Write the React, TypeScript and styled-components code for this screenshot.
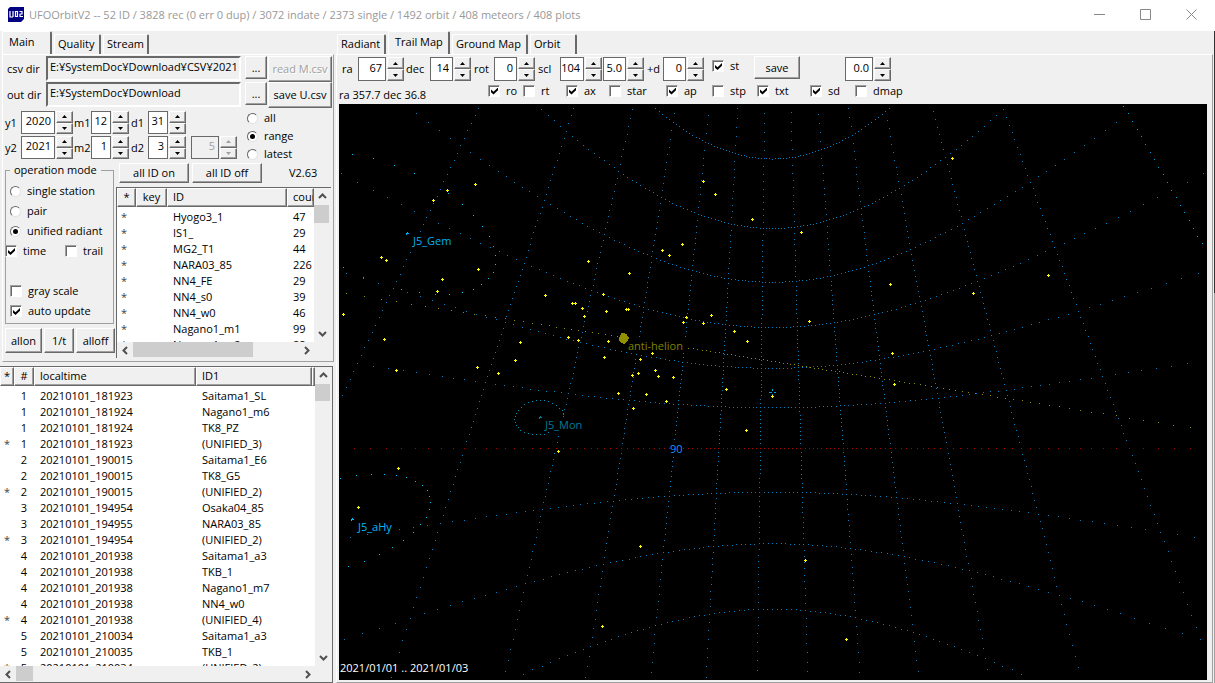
import React from 'react';
import styled, { createGlobalStyle, css } from 'styled-components';

const FACE = '#f0f0f0';
const SHADOW = '#a0a0a0';
const DARK = '#696969';

const GlobalStyle = createGlobalStyle`
  * { box-sizing: border-box; }
  html, body, #root { height: 100%; }
  body {
    margin: 0;
    background: ${FACE};
    color: #000;
    font: 11px/16px "Open Sans", "Noto Sans", sans-serif;
    overflow: hidden;
  }
  button, input { font: inherit; color: inherit; margin: 0; padding: 0; }
`;

const raised = css`
  background: ${FACE};
  border: 1px solid;
  border-color: #fff ${DARK} ${DARK} #fff;
  box-shadow: inset -1px -1px 0 ${SHADOW};
`;

const Window = styled.div`
  display: flex;
  flex-direction: column;
  height: 100vh;
`;

const TitleBar = styled.header`
  display: flex;
  align-items: center;
  flex: none;
  height: 31px;
  padding: 0 0 2px 8px;
  background: #fff;
  color: #999;
`;

const Title = styled.h1`
  flex: 1;
  margin: 0 0 0 4px;
  font-size: 11px;
  font-weight: 400;
  line-height: 16px;
  white-space: nowrap;
`;

const CaptionButton = styled.button`
  display: flex;
  align-items: center;
  justify-content: center;
  width: 46px;
  height: 29px;
  border: 0;
  background: none;
  &:last-child { margin-right: 1px; }
`;

const Workspace = styled.div`
  flex: 1;
  min-height: 0;
  display: grid;
  grid-template-columns: 335px minmax(0, 1fr) 1px;
`;

const Column = styled.div`
  display: flex;
  flex-direction: column;
  min-width: 0;
  min-height: 0;
`;

const Backdrop = styled.div`
  background: linear-gradient(#333 262px, ${SHADOW} 262px);
`;

const TabStrip = styled.div`
  display: flex;
  align-items: flex-end;
  gap: 2px;
  flex: none;
  height: 23px;
  padding-left: 2px;
`;

const TabButton = styled.button<{ $active?: boolean; $width: number }>`
  width: ${p => p.$width}px;
  height: ${p => (p.$active ? 23 : 20)}px;
  padding: 0 0 ${p => (p.$active ? 2 : 1)}px ${p => (p.$active ? 6 : 3)}px;
  border: 0;
  border-top: 1px solid #fff;
  border-left: 1px solid #fff;
  border-right: 2px solid ${DARK};
  border-radius: 2px 2px 0 0;
  background: ${FACE};
  text-align: left;
  white-space: nowrap;
`;

const Sheet = styled.section<{ $grow?: boolean }>`
  display: flex;
  flex-direction: column;
  flex: ${p => (p.$grow ? '1' : 'none')};
  min-height: 0;
  border: 1px solid;
  border-color: #fff ${SHADOW} ${SHADOW} #fff;
`;

const MainSheet = styled(Sheet)`
  height: 308px;
  margin: 0 1px 0 2px;
  padding: 1px 2px 3px;
  overflow: hidden;
`;

const PathRow = styled.div`
  display: grid;
  grid-template-columns: 41px 195px 4px 22px 1px 1fr;
  height: 26px;
  & > button:nth-of-type(1) { grid-column: 4; height: 23px; }
  & > button:nth-of-type(2) { grid-column: 6; height: 26px; margin-right: -1px; }
`;

const PathLabel = styled.label`
  padding: 5px 0 0 2px;
  white-space: nowrap;
`;

const PathInput = styled.input`
  min-width: 0;
  height: 25px;
  padding: 0 2px 5px;
  border: 2px solid;
  border-color: ${DARK} #fff #fff ${DARK};
  background: ${FACE};
`;

const PushButton = styled.button`
  ${raised}
  min-width: 0;
  white-space: nowrap;
  overflow: hidden;
  &:disabled { color: ${SHADOW}; text-shadow: 1px 1px 0 #fff; }
`;

const DateArea = styled.div`
  display: grid;
  grid-template-columns: 242px 1fr;
  height: 53px;
  padding-top: 1px;
`;

const DateGrid = styled.div`
  display: grid;
  grid-template-columns: 16px 53px 17px 40px 17px 43px 47px;
  grid-template-rows: 23px 23px;
  row-gap: 2px;
  padding-top: 2px;
  align-items: center;
`;

const Spin = styled.span<{ $box: number; $tall?: boolean }>`
  display: grid;
  grid-template-columns: ${p => p.$box}px 17px;
  column-gap: 1px;
  height: ${p => (p.$tall ? 24 : 23)}px;
`;

const SpinInput = styled.input`
  min-width: 0;
  padding: 0 3px 3px 0;
  border: 1px solid ${DARK};
  background: #fff;
  text-align: right;
  &:disabled { background: ${FACE}; color: ${SHADOW}; }
`;

const SpinArrows = styled.span`
  display: grid;
  grid-template-rows: 1fr 1fr;
`;

const SpinArrow = styled.button`
  ${raised}
  display: flex;
  align-items: center;
  justify-content: center;
  &:disabled { color: ${SHADOW}; }
`;

const ChoiceLabel = styled.label`
  display: inline-flex;
  align-items: center;
  gap: 6px;
  height: 20px;
  white-space: nowrap;
`;

const Radio = styled.input`
  appearance: none;
  position: relative;
  flex: none;
  width: 11px;
  height: 11px;
  border: 1px solid;
  border-color: ${DARK} #e3e3e3 #e3e3e3 ${DARK};
  border-radius: 50%;
  background: #fff;
  &:checked::before {
    content: '';
    position: absolute;
    inset: 2px;
    border-radius: 50%;
    background: #000;
  }
`;

const Check = styled.input`
  appearance: none;
  position: relative;
  flex: none;
  width: 12px;
  height: 12px;
  border: 1px solid;
  border-color: ${SHADOW} #fff #fff ${SHADOW};
  box-shadow: inset 1px 1px 0 ${DARK};
  background: #fff;
  &:checked::before {
    content: '';
    position: absolute;
    left: 2px;
    top: 2px;
    width: 7px;
    height: 7px;
    background: #000;
    clip-path: polygon(0 29%, 36% 62%, 100% 0, 100% 38%, 36% 100%, 0 67%);
  }
`;

const RangeChoices = styled.div`
  display: flex;
  flex-direction: column;
  & > label { height: 18px; }
`;

const LowerArea = styled.div`
  display: grid;
  grid-template-columns: 111px 1fr;
  flex: 1;
  min-height: 0;
`;

const ModeColumn = styled.div`
  display: flex;
  flex-direction: column;
  gap: 4px;
  padding-top: 1px;
`;

const ModeBox = styled.fieldset`
  display: flex;
  flex-direction: column;
  width: 109px;
  height: 162px;
  min-width: 0;
  margin: 0;
  padding: 3px 4px 0;
  border: 1px solid ${SHADOW};
`;

const ModeLegend = styled.legend`
  padding: 0 4px;
  white-space: nowrap;
`;

const TimeRow = styled.div`
  display: grid;
  grid-template-columns: 60px 1fr;
  height: 40px;
  margin: 0 -5px;
`;

const ModeButtons = styled.div`
  display: grid;
  grid-template-columns: 37px 30px 39px;
  gap: 2px;
  height: 25px;
`;

const IdColumn = styled.div`
  display: flex;
  flex-direction: column;
  min-width: 0;
  min-height: 0;
`;

const IdActions = styled.div`
  display: grid;
  grid-template-columns: 70px 70px 1fr;
  gap: 3px;
  height: 26px;
  padding: 2px 0 4px 3px;
`;

const Version = styled.span`
  padding-left: 24px;
  line-height: 20px;
`;

const ListFrame = styled.div`
  display: grid;
  grid-template-columns: minmax(0, 1fr) 17px;
  grid-template-rows: minmax(0, 1fr) 16px;
  flex: 1;
  min-height: 0;
  border-top: 1px solid ${DARK};
  border-left: 1px solid ${DARK};
`;

const StationFrame = styled(ListFrame)`
  margin-top: 4px;
  border-left: 0;
  border-right: 1px solid ${DARK};
  border-bottom: 1px solid ${DARK};
  margin-right: 2px;
`;

const ListView = styled.div`
  background: #fff;
  overflow: hidden;
`;

const Table = styled.table`
  table-layout: fixed;
  width: 100%;
  border-collapse: separate;
  border-spacing: 0;
  tbody::before { content: ''; display: block; height: 2px; }
`;

const HeadCell = styled.th<{ $center?: boolean }>`
  height: 19px;
  padding: 0 0 1px ${p => (p.$center ? 0 : 5)}px;
  background: ${FACE};
  border-top: 1px solid #fff;
  border-left: 1px solid #fff;
  border-right: 1px solid ${DARK};
  border-bottom: 1px solid ${DARK};
  box-shadow: inset -1px -1px 0 ${SHADOW};
  font-weight: 400;
  line-height: 16px;
  text-align: ${p => (p.$center ? 'center' : 'left')};
  overflow: hidden;
  white-space: nowrap;
`;

const Cell = styled.td<{ $right?: boolean }>`
  height: 16px;
  padding: 0 ${p => (p.$right ? 7 : 0)}px 0 ${p => (p.$right ? 0 : 6)}px;
  line-height: 16px;
  text-align: ${p => (p.$right ? 'right' : 'left')};
  white-space: nowrap;
  &:first-child { padding-left: 4px; color: #444; }
`;

const ScrollBar = styled.div<{ $across?: boolean }>`
  display: flex;
  flex-direction: ${p => (p.$across ? 'row' : 'column')};
  justify-content: space-between;
  min-height: 0;
`;

const ScrollButton = styled.button`
  display: flex;
  align-items: center;
  justify-content: center;
  flex: none;
  width: 16px;
  height: 17px;
  border: 0;
  background: none;
`;

const Track = styled.div`
  flex: 1;
  min-height: 0;
`;

const Thumb = styled.div<{ $across?: boolean; $size: number }>`
  width: ${p => (p.$across ? `${p.$size}px` : '15px')};
  height: ${p => (p.$across ? '15px' : `${p.$size}px`)};
  background: #cdcdcd;
`;

const MapSheet = styled(Sheet)`
  margin: 0 1px 0 1px;
  padding: 0 5px 2px 2px;
`;

const Toolbar = styled.div`
  display: grid;
  grid-template-columns: 16px 48px 24px 44px 20px 44px 22px 43px 44px 16px 49px 42px 91px 46px;
  height: 27px;
  padding: 1px 0 0 3px;
  align-items: center;
  white-space: nowrap;
  & > ${ChoiceLabel} { align-self: start; }
`;

const SaveButton = styled(PushButton)`
  align-self: start;
  width: 46px;
  height: 23px;
`;

const OptionRow = styled.div`
  display: grid;
  grid-template-columns: 149px 35px 43px 43px 57px 46px 45px 53px 45px 1fr;
  height: 22px;
  & > ${ChoiceLabel} { height: 17px; }
`;

const Pointer = styled.output`
  padding-top: 5px;
  white-space: nowrap;
`;

const SkyPane = styled.div`
  flex: 1;
  min-height: 0;
  background: #000;
  svg { display: block; }
`;

const Sky = styled.svg`
  width: 100%;
  height: 100%;
  font-size: 11px;
  shape-rendering: crispEdges;
`;

type Point = [number, number];

const VIEW = { ra: 67, dec: 14, scale: 225 };
const rad = (deg: number) => (deg * Math.PI) / 180;

/* Gnomonic projection; offsets are measured from the centre of the chart. */
function project(ra: number, dec: number): Point | null {
  const h = rad(ra - VIEW.ra);
  const d = rad(dec);
  const d0 = rad(VIEW.dec);
  const c = Math.sin(d0) * Math.sin(d) + Math.cos(d0) * Math.cos(d) * Math.cos(h);
  if (c < 0.1) return null;
  const x = (VIEW.scale * Math.cos(d) * Math.sin(h)) / c;
  const y = (VIEW.scale * (Math.cos(d0) * Math.sin(d) - Math.sin(d0) * Math.cos(d) * Math.cos(h))) / c;
  if (Math.abs(x) > 432 || Math.abs(y) > 286) return null;
  return [Math.floor(-x - 0.5), Math.floor(-y)];
}

const dots = (points: Array<Point | null>) =>
  points.map(p => (p ? `M${p[0]} ${p[1]}h1v1h-1z` : '')).join('');

const span = (from: number, to: number) =>
  Array.from({ length: to - from + 1 }, (_, i) => from + i);

const grid = dots([
  ...span(1, 35).flatMap(i => span(-70, 85).map(dec => (dec === 0 ? null : project(i * 10, dec)))),
  ...[-50, -40, -30, -20, -10, 10, 20, 30, 40, 50, 60, 70, 80].flatMap(dec =>
    span(0, 359).map(ra => project(ra, dec)),
  ),
]);
const zeroHour = dots(span(-70, 85).map(dec => project(0, dec)));
const equator = dots(span(0, 359).map(ra => project(ra, 0)));
const ecliptic = dots(
  span(0, 359).map(l => {
    const e = rad(23.44);
    const s = Math.sin(rad(l));
    const ra = (Math.atan2(s * Math.cos(e), Math.cos(rad(l))) * 180) / Math.PI;
    return project(ra, (Math.asin(s * Math.sin(e)) * 180) / Math.PI);
  }),
);

const meteors: Point[] = [
  [-340, -192], [-326, -202], [-298, -208], [-392, -135], [-387, -132], [-295, -123], [-331, -113],
  [-336, -101], [-430, -78], [-389, -53], [-377, -22], [-296, -25], [-275, -19], [-258, -32],
  [-253, -50], [-228, -97], [-205, -55], [-195, -52], [-201, -89], [-198, -89], [-191, -84],
  [-189, -76], [-185, -131], [-170, -98], [-167, -81], [-147, -83], [-145, -83], [-144, -119],
  [-165, -51], [-169, -35], [-141, -17], [-70, -211], [-58, -198], [-21, -173], [28, -160],
  [-111, -142], [-104, -137], [-91, -148], [117, -108], [-87, -75], [-90, -70], [-70, -69],
  [-62, -77], [-39, -61], [-26, -51], [36, -71], [-121, -39], [-133, -33], [-135, -19],
  [-118, -22], [-115, -16], [-100, -15], [119, -39], [121, -8], [-47, -3], [179, -234],
  [275, -117], [200, -99], [-155, 1], [-140, 16], [-215, 59], [-375, 76], [-415, 115],
  [-171, 234], [-127, 2], [-107, 9], [-1, 4], [-27, 38], [-133, 154], [32, 168], [73, 247],
];
const crosses = meteors.map(([x, y]) => `M${x - 1} ${y}h3v1h-3zM${x} ${y - 1}h1v3h-1z`).join('');

const gemRing: Point[] = [
  [-421, -238], [-400, -234], [-379, -227], [-359, -219], [-325, -199], [-311, -188], [-300, -177],
  [-291, -166], [-284, -156], [-280, -146], [-278, -137], [-278, -128], [-280, -120], [-285, -114],
  [-292, -108], [-300, -103], [-311, -100], [-324, -98], [-338, -98], [-354, -100], [-372, -103],
  [-410, -115], [-430, -125],
];
const hyaRing: Point[] = [
  [-433, 86], [-417, 83], [-402, 82], [-389, 82], [-377, 83], [-367, 85], [-358, 89], [-351, 93],
  [-346, 98], [-344, 104], [-343, 110], [-344, 117], [-347, 125], [-353, 132], [-360, 140],
  [-370, 148], [-381, 155], [-394, 162], [-409, 169], [-425, 174],
];
const monRing: Point[] = [
  [-233, 8], [-237, 8], [-241, 9], [-245, 10], [-249, 12], [-252, 15], [-255, 18], [-257, 21],
  [-258, 24], [-259, 27], [-258, 30], [-257, 33], [-255, 35], [-253, 38], [-249, 40], [-245, 41],
  [-241, 42], [-237, 42], [-233, 42], [-229, 42], [-225, 40], [-229, 8], [-225, 9], [-221, 11],
  [-217, 13], [-214, 16], [-211, 18], [-210, 21], [-210, 24],
];

const labels = [
  { text: 'J5_Gem', x: -360, y: -147, width: 40, color: '#00b0f0', mark: [-366, -159] },
  { text: 'anti-helion', x: -145, y: -42, width: 59, color: '#808000' },
  { text: 'J5_Mon', x: -228, y: 37, width: 41, color: '#007c98', mark: [-233, 25] },
  { text: '90', x: -103, y: 61, width: 13, color: '#1e90ff' },
  { text: 'J5_aHy', x: -415, y: 139, width: 36, color: '#00b8f8', mark: [-421, 127] },
];

const TrailMap = () => (
  <SkyPane>
    <Sky role="img" aria-label="Trail map">
      <svg x="50%" y="50%" overflow="visible">
        <path d={grid} fill="#0080c0" />
        <path d={zeroHour} fill="#00a0e8" />
        <path d={equator} fill="#b00000" />
        <path d={ecliptic} fill="#909000" />
        <path d={dots(gemRing) + dots(hyaRing)} fill="#00c0ff" />
        <path d={dots(monRing)} fill="#0090b0" />
        <path d="M-152 -59h4v1h2v2h1v1h1v2h-1v2h-1v1h-1v1h-1v1h-2v-1h-2v-1h-1v-1h-1v-4h1v-2h1z" fill="#909000" />
        <path d="M-4 0h3v1h-3zM1 0h2v1h-2zM-1 -3h1v2h-1zM-1 2h1v2h-1z" fill="#00a0e0" />
        {labels.map(l => (
          <g key={l.text} fill={l.color}>
            <rect x={l.x} y={l.y - 11} width={l.width} height="14" fill="#000" />
            <text x={l.x} y={l.y}>{l.text}</text>
            {l.mark && (
              <path d={`M${l.mark[0] - 1} ${l.mark[1]}h1v2h-1zM${l.mark[0]} ${l.mark[1]}h1v1h-1zM${l.mark[0]} ${l.mark[1] - 1}h1v1h-1zM${l.mark[0] + 1} ${l.mark[1]}h1v1h-1z`} />
            )}
          </g>
        ))}
        <path d={crosses} fill="#ffff00" />
      </svg>
      <svg y="100%" overflow="visible">
        <text x="1" y="-8" fill="#fff">2021/01/01 .. 2021/01/03</text>
      </svg>
    </Sky>
  </SkyPane>
);

const Arrow = ({ up }: { up?: boolean }) => (
  <svg width="5" height="3" viewBox="0 0 5 3" fill="currentColor" aria-hidden="true">
    <path d={up ? 'M0 3L2.5 0L5 3z' : 'M0 0L2.5 3L5 0z'} />
  </svg>
);

type SpinnerProps = { name: string; value: string; box: number; tall?: boolean; disabled?: boolean };

const Spinner = ({ name, value, box, tall, disabled }: SpinnerProps) => (
  <Spin $box={box} $tall={tall}>
    <SpinInput id={name} aria-label={name} defaultValue={value} disabled={disabled} />
    <SpinArrows>
      <SpinArrow aria-label={`${name} up`} disabled={disabled}><Arrow up /></SpinArrow>
      <SpinArrow aria-label={`${name} down`} disabled={disabled}><Arrow /></SpinArrow>
    </SpinArrows>
  </Spin>
);

const Option = ({ text, on }: { text: string; on?: boolean }) => (
  <ChoiceLabel>
    <Check type="checkbox" defaultChecked={on} />
    {text}
  </ChoiceLabel>
);

const Choice = ({ group, text, on }: { group: string; text: string; on?: boolean }) => (
  <ChoiceLabel>
    <Radio type="radio" name={group} defaultChecked={on} />
    {text}
  </ChoiceLabel>
);

const chevrons = {
  up: 'M1 6L4.5 2.5L8 6',
  down: 'M1 3L4.5 6.5L8 3',
  left: 'M6 1L2.5 4.5L6 8',
  right: 'M3 1L6.5 4.5L3 8',
};

const ScrollArrow = ({ to }: { to: keyof typeof chevrons }) => (
  <ScrollButton aria-label={`Scroll ${to}`}>
    <svg width="9" height="9" viewBox="0 0 9 9" fill="none" stroke="#505050" strokeWidth="2" aria-hidden="true">
      <path d={chevrons[to]} />
    </svg>
  </ScrollButton>
);

const Scroller = ({ across, size }: { across?: boolean; size: number }) => (
  <ScrollBar $across={across}>
    <ScrollArrow to={across ? 'left' : 'up'} />
    <Track><Thumb $across={across} $size={size} /></Track>
    <ScrollArrow to={across ? 'right' : 'down'} />
  </ScrollBar>
);

const stations: Array<[string, string]> = [
  ['Hyogo3_1', '47'], ['IS1_', '29'], ['MG2_T1', '44'], ['NARA03_85', '226'], ['NN4_FE', '29'],
  ['NN4_s0', '39'], ['NN4_w0', '46'], ['Nagano1_m1', '99'], ['Nagano1_m2', '88'],
];

const records: Array<[string, string, string, string]> = [
  ['', '1', '20210101_181923', 'Saitama1_SL'],
  ['', '1', '20210101_181924', 'Nagano1_m6'],
  ['', '1', '20210101_181924', 'TK8_PZ'],
  ['*', '1', '20210101_181923', '(UNIFIED_3)'],
  ['', '2', '20210101_190015', 'Saitama1_E6'],
  ['', '2', '20210101_190015', 'TK8_G5'],
  ['*', '2', '20210101_190015', '(UNIFIED_2)'],
  ['', '3', '20210101_194954', 'Osaka04_85'],
  ['', '3', '20210101_194955', 'NARA03_85'],
  ['*', '3', '20210101_194954', '(UNIFIED_2)'],
  ['', '4', '20210101_201938', 'Saitama1_a3'],
  ['', '4', '20210101_201938', 'TKB_1'],
  ['', '4', '20210101_201938', 'Nagano1_m7'],
  ['', '4', '20210101_201938', 'NN4_w0'],
  ['*', '4', '20210101_201938', '(UNIFIED_4)'],
  ['', '5', '20210101_210034', 'Saitama1_a3'],
  ['', '5', '20210101_210035', 'TKB_1'],
  ['*', '5', '20210101_210034', '(UNIFIED_2)'],
];

const Logo = () => (
  <svg width="17" height="17" viewBox="0 0 17 17" aria-hidden="true">
    <path d="M2 1H16V13L13 16H0V3z" fill="#000080" />
    <path
      d="M2 5v6M1.500 11h3.500M5 5v6M7.500 5v6M7 5.500h3M9.500 5v6M7 10.500h3M11.500 5.500h3M14 5v3.500M11.500 8h3M12 8v3M11.500 10.500h3.500"
      fill="none"
      stroke="#fff"
      strokeWidth="1.200"
    />
  </svg>
);

const LeftColumn = () => (
  <Column>
    <TabStrip role="tablist">
      <TabButton role="tab" aria-selected $active $width={50}>Main</TabButton>
      <TabButton role="tab" $width={47}>Quality</TabButton>
      <TabButton role="tab" $width={46}>Stream</TabButton>
    </TabStrip>
    <MainSheet>
      <PathRow>
        <PathLabel htmlFor="csv">csv dir</PathLabel>
        <PathInput id="csv" defaultValue="E:¥SystemDoc¥Download¥CSV¥2021" />
        <PushButton>...</PushButton>
        <PushButton disabled>read M.csv</PushButton>
      </PathRow>
      <PathRow>
        <PathLabel htmlFor="out">out dir</PathLabel>
        <PathInput id="out" defaultValue="E:¥SystemDoc¥Download" />
        <PushButton>...</PushButton>
        <PushButton>save U.csv</PushButton>
      </PathRow>
      <DateArea>
        <DateGrid>
          <label htmlFor="y1">y1</label><Spinner name="y1" value="2020" box={34} />
          <label htmlFor="m1">m1</label><Spinner name="m1" value="12" box={20} />
          <label htmlFor="d1">d1</label><Spinner name="d1" value="31" box={20} />
          <span />
          <label htmlFor="y2">y2</label><Spinner name="y2" value="2021" box={34} />
          <label htmlFor="m2">m2</label><Spinner name="m2" value="1" box={20} />
          <label htmlFor="d2">d2</label><Spinner name="d2" value="3" box={20} />
          <Spinner name="days" value="5" box={28} disabled />
        </DateGrid>
        <RangeChoices>
          <Choice group="range" text="all" />
          <Choice group="range" text="range" on />
          <Choice group="range" text="latest" />
        </RangeChoices>
      </DateArea>
      <LowerArea>
        <ModeColumn>
          <ModeBox>
            <ModeLegend>operation mode</ModeLegend>
            <Choice group="mode" text="single station" />
            <Choice group="mode" text="pair" />
            <Choice group="mode" text="unified radiant" on />
            <TimeRow>
              <Option text="time" on />
              <Option text="trail" />
            </TimeRow>
            <Option text="gray scale" />
            <Option text="auto update" on />
          </ModeBox>
          <ModeButtons>
            <PushButton>allon</PushButton>
            <PushButton>1/t</PushButton>
            <PushButton>alloff</PushButton>
          </ModeButtons>
        </ModeColumn>
        <IdColumn>
          <IdActions>
            <PushButton>all ID on</PushButton>
            <PushButton>all ID off</PushButton>
            <Version>V2.63</Version>
          </IdActions>
          <ListFrame>
            <ListView>
              <Table>
                <colgroup><col width="19" /><col width="31" /><col width="120" /><col /></colgroup>
                <thead>
                  <tr>
                    <HeadCell $center>*</HeadCell>
                    <HeadCell $center>key</HeadCell>
                    <HeadCell>ID</HeadCell>
                    <HeadCell>count</HeadCell>
                  </tr>
                </thead>
                <tbody>
                  {stations.map(([id, count]) => (
                    <tr key={id}>
                      <Cell>*</Cell><Cell /><Cell>{id}</Cell><Cell>{count}</Cell>
                    </tr>
                  ))}
                </tbody>
              </Table>
            </ListView>
            <Scroller size={18} />
            <Scroller across size={120} />
          </ListFrame>
        </IdColumn>
      </LowerArea>
    </MainSheet>
    <StationFrame>
      <ListView>
        <Table>
          <colgroup><col width="14" /><col width="20" /><col width="162" /><col width="116" /><col /></colgroup>
          <thead>
            <tr>
              <HeadCell $center>*</HeadCell>
              <HeadCell $center>#</HeadCell>
              <HeadCell>localtime</HeadCell>
              <HeadCell>ID1</HeadCell>
              <HeadCell />
            </tr>
          </thead>
          <tbody>
            {records.map(([mark, n, time, id], i) => (
              <tr key={i}>
                <Cell>{mark}</Cell><Cell $right>{n}</Cell><Cell>{time}</Cell><Cell>{id}</Cell><Cell />
              </tr>
            ))}
          </tbody>
        </Table>
      </ListView>
      <Scroller size={17} />
      <Scroller across size={17} />
    </StationFrame>
  </Column>
);

const RightColumn = () => (
  <Column>
    <TabStrip role="tablist">
      <TabButton role="tab" $width={49}>Radiant</TabButton>
      <TabButton role="tab" aria-selected $active $width={62}>Trail Map</TabButton>
      <TabButton role="tab" $width={76}>Ground Map</TabButton>
      <TabButton role="tab" $width={47}>Orbit</TabButton>
    </TabStrip>
    <MapSheet $grow>
      <Toolbar>
        <label htmlFor="ra">ra</label><Spinner name="ra" value="67" box={28} tall />
        <label htmlFor="dec">dec</label><Spinner name="dec" value="14" box={23} tall />
        <label htmlFor="rot">rot</label><Spinner name="rot" value="0" box={23} tall />
        <label htmlFor="scl">scl</label><Spinner name="scl" value="104" box={24} tall />
        <Spinner name="size" value="5.0" box={23} tall />
        <label htmlFor="plusd">+d</label><Spinner name="plusd" value="0" box={23} tall />
        <Option text="st" on />
        <SaveButton>save</SaveButton>
        <Spinner name="offset" value="0.0" box={28} tall />
      </Toolbar>
      <OptionRow>
        <Pointer>ra 357.7 dec 36.8</Pointer>
        <Option text="ro" on /><Option text="rt" /><Option text="ax" on /><Option text="star" />
        <Option text="ap" on /><Option text="stp" /><Option text="txt" on /><Option text="sd" on />
        <Option text="dmap" />
      </OptionRow>
      <TrailMap />
    </MapSheet>
  </Column>
);

export default function App() {
  return (
    <Window>
      <GlobalStyle />
      <TitleBar>
        <Logo />
        <Title>UFOOrbitV2 -- 52 ID / 3828 rec (0 err 0 dup) / 3072 indate / 2373 single / 1492 orbit / 408 meteors / 408 plots</Title>
        <CaptionButton aria-label="Minimize">
          <svg width="11" height="11" stroke="#888"><path d="M0 5.500h11" /></svg>
        </CaptionButton>
        <CaptionButton aria-label="Maximize">
          <svg width="11" height="11" fill="none" stroke="#888"><path d="M.5 .5h10v10h-10z" /></svg>
        </CaptionButton>
        <CaptionButton aria-label="Close">
          <svg width="11" height="11" stroke="#888"><path d="M.5 .5l10 10M10.500 .5l-10 10" /></svg>
        </CaptionButton>
      </TitleBar>
      <Workspace>
        <LeftColumn />
        <RightColumn />
        <Backdrop />
      </Workspace>
    </Window>
  );
}
